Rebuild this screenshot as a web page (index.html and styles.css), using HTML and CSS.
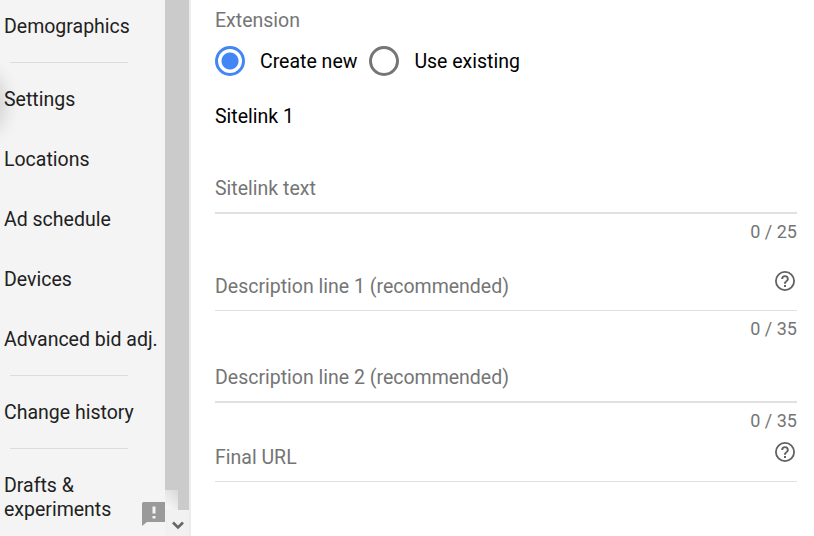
FILE: index.html
```html
<!DOCTYPE html>
<html lang="en">
<head>
<meta charset="utf-8">
<title>Sitelink extension</title>
<link rel="stylesheet" href="styles.css">
</head>
<body>
<div class="page">
  <nav class="side">
    <div class="blob"></div>
    <div class="item first">Demographics</div>
    <div class="rule"></div>
    <div class="item">Settings</div>
    <div class="item">Locations</div>
    <div class="item">Ad schedule</div>
    <div class="item">Devices</div>
    <div class="item">Advanced bid adj.</div>
    <div class="rule"></div>
    <div class="item">Change history</div>
    <div class="rule"></div>
    <div class="item two">Drafts &amp;<br>experiments</div>
    <svg class="feedback" viewBox="0 0 24 24" width="24" height="24"><path fill="#9a9a9a" d="M1.500 0h21a1.500 1.500 0 0 1 1.500 1.500v17a1.500 1.500 0 0 1-1.500 1.500H5l-5 4V1.500A1.500 1.500 0 0 1 1.500 0z"/><path fill="#f4f4f4" d="M10.500 4.500h3v7h-3zM10.500 14h3v2.500h-3z"/></svg>
  </nav>
  <div class="scroll">
    <div class="track"><div class="glow"></div></div>
    <div class="down"><svg viewBox="0 0 12 9" width="12" height="9"><path d="M1 1.500l5 5 5-5" fill="none" stroke="#666" stroke-width="2.600"/></svg></div>
  </div>
  <main class="main">
    <div class="ext">Extension</div>
    <div class="radios">
      <span class="radio on"></span><span class="rlabel">Create new</span>
      <span class="radio"></span><span class="rlabel">Use existing</span>
    </div>
    <h2 class="title">Sitelink 1</h2>
    <div class="field f1"><span>Sitelink text</span></div>
    <div class="count">0 / 25</div>
    <div class="field f2 thin"><span>Description line 1 (recommended)</span>
      <svg class="help" viewBox="0 0 24 24" width="24" height="24"><path fill="#616161" d="M12 2a10 10 0 1 0 0 20 10 10 0 0 0 0-20zm0 18.2a8.2 8.2 0 1 1 0-16.400 8.200 8.200 0 0 1 0 16.400zM11 16h2v2h-2zM12 6.200a3.800 3.800 0 0 0-3.800 3.800h1.900a1.900 1.900 0 1 1 3.800 0c0 1.900-2.900 1.700-2.900 4.800h2c0-2.100 2.800-2.400 2.800-4.800A3.800 3.800 0 0 0 12 6.200z"/></svg>
    </div>
    <div class="count">0 / 35</div>
    <div class="field f3"><span>Description line 2 (recommended)</span></div>
    <div class="count">0 / 35</div>
    <div class="field f4 thin"><span>Final URL</span>
      <svg class="help" viewBox="0 0 24 24" width="24" height="24"><path fill="#616161" d="M12 2a10 10 0 1 0 0 20 10 10 0 0 0 0-20zm0 18.2a8.2 8.2 0 1 1 0-16.400 8.200 8.200 0 0 1 0 16.400zM11 16h2v2h-2zM12 6.200a3.800 3.800 0 0 0-3.800 3.800h1.900a1.900 1.900 0 1 1 3.800 0c0 1.900-2.900 1.700-2.900 4.800h2c0-2.100 2.800-2.400 2.800-4.800A3.800 3.800 0 0 0 12 6.200z"/></svg>
    </div>
  </main>
</div>
</body>
</html>
```
FILE: styles.css
```css
html, body { margin: 0; padding: 0; height: 100%; overflow: hidden; background: #fff; }
body { font-family: Roboto, "Liberation Sans", sans-serif; font-size: 19.5px; color: #212121; }
.page { display: flex; width: 814px; height: 536px; overflow: hidden; }

.side { position: relative; flex: 0 0 165px; background: #f4f4f4; overflow: hidden; }
.blob { position: absolute; left: -34px; top: 78px; width: 34px; height: 50px; border-radius: 50%; box-shadow: 0 0 18px 6px rgba(0,0,0,.14); }
.item { height: 60px; box-sizing: border-box; padding: 2px 0 0 4px; display: flex; align-items: center; white-space: nowrap; line-height: 24px; }
.item.first { margin-top: -4px; }
.item.two { height: auto; padding-top: 19px; display: block; }
.rule { height: 1px; margin: 6px 37px 6px 10px; background: #dcdcdc; }
.feedback { position: absolute; left: 142px; top: 502px; }

.scroll { flex: 0 0 24px; display: flex; flex-direction: column; border-right: 2px solid #ececec; }
.track { position: relative; flex: 1; background: #cbcbcb; }
.glow { position: absolute; left: 0; bottom: 0; width: 13px; height: 20px; background: linear-gradient(45deg, #f4f4f4 20%, #d8d8d8 100%); }
.down { flex: 0 0 26px; background: #f1f1f1; display: flex; align-items: center; justify-content: center; padding: 4px 0 0 2px; box-sizing: border-box; }

.main { flex: 1; padding: 0 17px 0 24px; min-width: 0; }
.ext { color: #757575; line-height: 24px; margin-top: 9px; }
.radios { display: flex; align-items: center; height: 30px; margin-top: 13px; color: #000; }
.radio { width: 30px; height: 30px; box-sizing: border-box; border: 3px solid #757575; border-radius: 50%; flex: none; }
.radio.on { border-color: #4285f4; background: radial-gradient(circle, #4285f4 0 8px, #fff 9px); }
.rlabel { margin: 0 12px 0 15px; }
.title { font-size: 19.5px; font-weight: 400; color: #000; line-height: 24px; margin: 29px 0 0; }
.field { position: relative; display: flex; align-items: flex-end; justify-content: space-between; color: #757575; border-bottom: 2px solid #e0e0e0; line-height: 24px; padding-bottom: 11px; }
.field.thin { border-bottom-width: 1px; }
.field svg { position: absolute; right: 0; bottom: 17px; }
.f1 { margin-top: 48px; }
.f2 { margin-top: 31px; }
.f3 { margin-top: 25px; }
.f4 { margin-top: 13px; }
.count { text-align: right; color: #757575; font-size: 18px; line-height: 24px; margin-top: 6px; }
```
